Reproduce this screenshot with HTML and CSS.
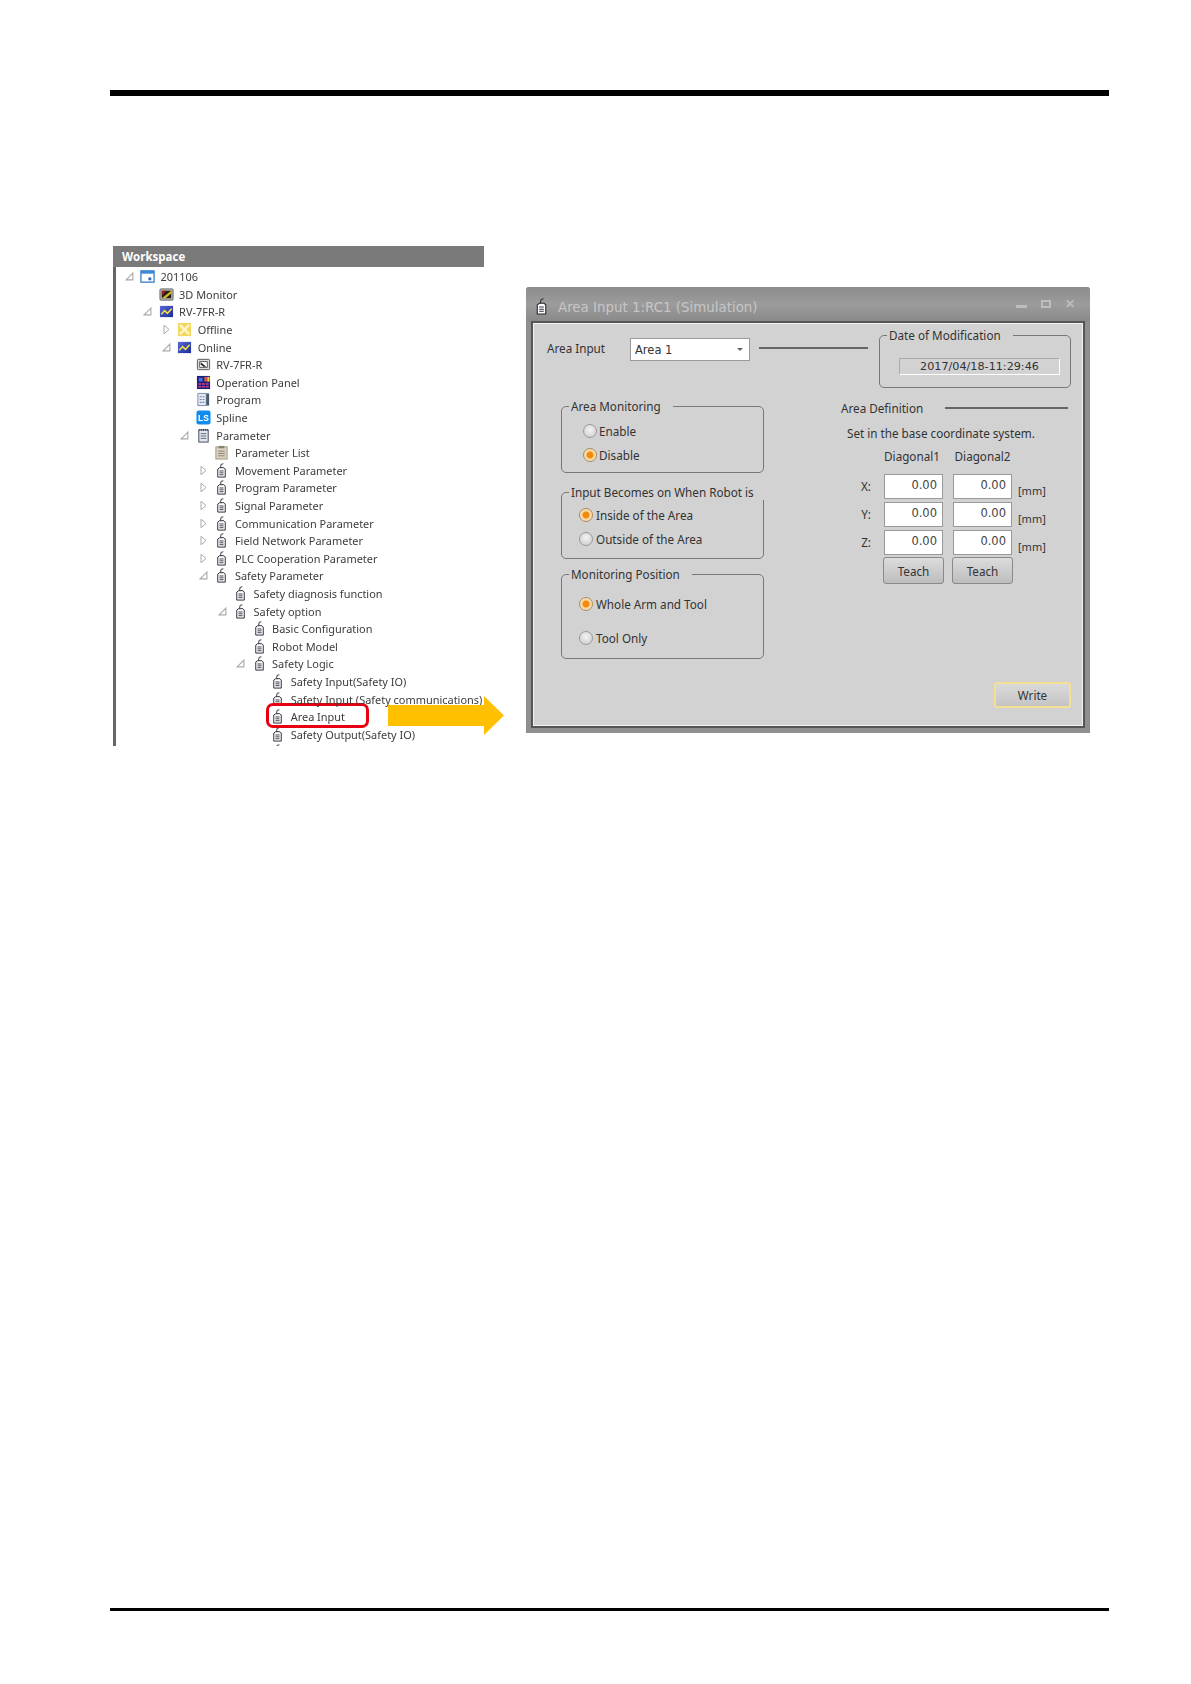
FILE: index.html
```html
<!DOCTYPE html>
<html lang="en">
<head>
<meta charset="utf-8">
<title>Area Input</title>
<link rel="stylesheet" href="styles.css">
</head>
<body>
<svg class="defs" width="0" height="0" aria-hidden="true">
  <defs>
    <linearGradient id="blue" x1="0" y1="0" x2="1" y2="1"><stop offset="0" stop-color="#5a6ad8"/><stop offset="1" stop-color="#1c2a9a"/></linearGradient>
    <symbol id="i-win" viewBox="0 0 16 16"><rect x="1" y="2" width="14" height="12" fill="#fff" stroke="#3a7cc8" stroke-width="1.4"/><rect x="1" y="2" width="14" height="3" fill="#3a8ad8"/><rect x="9" y="9" width="3" height="3" fill="#2a6ab0"/></symbol>
    <symbol id="i-3d" viewBox="0 0 16 16"><rect x="1" y="2" width="14" height="12" rx="1" fill="#b8b8b8" stroke="#666"/><rect x="3" y="4" width="10" height="8" fill="#2a1a1a"/><path d="M3 12 13 4v3l-6 5z" fill="#c8c020"/><path d="M3 4h5L3 9z" fill="#a02020"/></symbol>
    <symbol id="i-zig" viewBox="0 0 16 16"><rect x="1" y="2" width="14" height="12" fill="url(#blue)"/><path d="M2.500 11 6 7l3 3 4.500-5" fill="none" stroke="#f0e040" stroke-width="1.700"/></symbol>
    <symbol id="i-off" viewBox="0 0 16 16"><rect x="1" y="1" width="14" height="14" fill="#f2d860"/><path d="M3 3 13 13M13 3 3 13" stroke="#fff6c8" stroke-width="2.500"/></symbol>
    <symbol id="i-rc" viewBox="0 0 16 16"><rect x="1.500" y="2.500" width="13" height="11" rx="1" fill="#ddd" stroke="#555"/><rect x="4" y="5" width="8" height="6" fill="#fff" stroke="#333" stroke-width=".8"/><path d="M5 5.500 11 10.500H8L5 8z" fill="#222"/></symbol>
    <symbol id="i-panel" viewBox="0 0 16 16"><rect x="1" y="1" width="14" height="14" fill="#1a2080"/><rect x="3" y="3" width="4" height="4" fill="#4a70e0"/><rect x="9" y="2" width="2.500" height="5" fill="#e86030"/><rect x="12" y="2" width="2.500" height="5" fill="#e8d040"/><path d="M2.500 9.500h3M6.500 9.500h3M10.500 9.500h3M2.500 12.500h3M6.500 12.500h3M10.500 12.500h3" stroke="#d04088" stroke-width="1.600"/></symbol>
    <symbol id="i-prog" viewBox="0 0 16 16"><path d="M2 1.500h9v13H2z" fill="#dfe8f4" stroke="#7a8aa0"/><rect x="11" y="1.500" width="3" height="13" fill="#4a5a70"/><path d="M4 5h2M7 5h2M4 8h2M7 8h2M4 11h2M7 11h2" stroke="#7a8aa0" stroke-width="1.200"/></symbol>
    <symbol id="i-spline" viewBox="0 0 16 16"><rect x="0.500" y="0.500" width="15" height="15" rx="2.500" fill="#0f8cf0"/><text x="8" y="12" text-anchor="middle" class="ls">LS</text></symbol>
    <symbol id="i-param" viewBox="0 0 16 16"><rect x="3" y="2" width="10" height="13" fill="#dde6f0" stroke="#445"/><path d="M4 1v2M6 1v2M8 1v2M10 1v2M12 1v2" stroke="#334" stroke-width=".9"/><path d="M5 6h6M5 8.500h6M5 11h6" stroke="#556" stroke-width=".9"/></symbol>
    <symbol id="i-list" viewBox="0 0 16 16"><rect x="2" y="2" width="12" height="13" fill="#d8d2c0" stroke="#a09880"/><rect x="5" y="1" width="6" height="2.500" fill="#888070"/><path d="M4.500 6.500h7M4.500 9h7M4.500 11.500h7" stroke="#8a8272"/></symbol>
    <symbol id="i-pend" viewBox="0 0 16 16"><path d="M7 5 7.500 1.500 10 .8" fill="none" stroke="#333" stroke-width="1"/><path d="M4 6.500 6 5h4.500L12 6.500V15H4z" fill="#fff" stroke="#223" stroke-width="1"/><path d="M5.800 8.500h4.400M5.800 10.500h4.400M5.800 12.500h4.400" stroke="#334" stroke-width="1"/></symbol>
    <symbol id="t-open" viewBox="0 0 8 8"><path d="M7 1V7H1z" fill="#fff" stroke="#aaa"/></symbol>
    <symbol id="t-closed" viewBox="0 0 7 10"><path d="M1 .7 6 5 1 9.300z" fill="#fff" stroke="#aaa"/></symbol>
  </defs>
</svg>

<div class="page">
  <div class="rule-top"></div>

  <div class="figure">
    <section class="workspace">
      <h2 class="ws-head">Workspace</h2>
      <div class="tree">
        <div class="row l0"><span class="tg"><svg class="to"><use href="#t-open"/></svg></span><svg class="ic"><use href="#i-win"/></svg><span>201106</span></div>
        <div class="row l1"><span class="tg"></span><svg class="ic"><use href="#i-3d"/></svg><span>3D Monitor</span></div>
        <div class="row l1"><span class="tg"><svg class="to"><use href="#t-open"/></svg></span><svg class="ic"><use href="#i-zig"/></svg><span>RV-7FR-R</span></div>
        <div class="row l2"><span class="tg"><svg class="tc"><use href="#t-closed"/></svg></span><svg class="ic"><use href="#i-off"/></svg><span>Offline</span></div>
        <div class="row l2"><span class="tg"><svg class="to"><use href="#t-open"/></svg></span><svg class="ic"><use href="#i-zig"/></svg><span>Online</span></div>
        <div class="row l3"><span class="tg"></span><svg class="ic"><use href="#i-rc"/></svg><span>RV-7FR-R</span></div>
        <div class="row l3"><span class="tg"></span><svg class="ic"><use href="#i-panel"/></svg><span>Operation Panel</span></div>
        <div class="row l3"><span class="tg"></span><svg class="ic"><use href="#i-prog"/></svg><span>Program</span></div>
        <div class="row l3"><span class="tg"></span><svg class="ic"><use href="#i-spline"/></svg><span>Spline</span></div>
        <div class="row l3"><span class="tg"><svg class="to"><use href="#t-open"/></svg></span><svg class="ic"><use href="#i-param"/></svg><span>Parameter</span></div>
        <div class="row l4"><span class="tg"></span><svg class="ic"><use href="#i-list"/></svg><span>Parameter List</span></div>
        <div class="row l4"><span class="tg"><svg class="tc"><use href="#t-closed"/></svg></span><svg class="ic"><use href="#i-pend"/></svg><span>Movement Parameter</span></div>
        <div class="row l4"><span class="tg"><svg class="tc"><use href="#t-closed"/></svg></span><svg class="ic"><use href="#i-pend"/></svg><span>Program Parameter</span></div>
        <div class="row l4"><span class="tg"><svg class="tc"><use href="#t-closed"/></svg></span><svg class="ic"><use href="#i-pend"/></svg><span>Signal Parameter</span></div>
        <div class="row l4"><span class="tg"><svg class="tc"><use href="#t-closed"/></svg></span><svg class="ic"><use href="#i-pend"/></svg><span>Communication Parameter</span></div>
        <div class="row l4"><span class="tg"><svg class="tc"><use href="#t-closed"/></svg></span><svg class="ic"><use href="#i-pend"/></svg><span>Field Network Parameter</span></div>
        <div class="row l4"><span class="tg"><svg class="tc"><use href="#t-closed"/></svg></span><svg class="ic"><use href="#i-pend"/></svg><span>PLC Cooperation Parameter</span></div>
        <div class="row l4"><span class="tg"><svg class="to"><use href="#t-open"/></svg></span><svg class="ic"><use href="#i-pend"/></svg><span>Safety Parameter</span></div>
        <div class="row l5"><span class="tg"></span><svg class="ic"><use href="#i-pend"/></svg><span>Safety diagnosis function</span></div>
        <div class="row l5"><span class="tg"><svg class="to"><use href="#t-open"/></svg></span><svg class="ic"><use href="#i-pend"/></svg><span>Safety option</span></div>
        <div class="row l6"><span class="tg"></span><svg class="ic"><use href="#i-pend"/></svg><span>Basic Configuration</span></div>
        <div class="row l6"><span class="tg"></span><svg class="ic"><use href="#i-pend"/></svg><span>Robot Model</span></div>
        <div class="row l6"><span class="tg"><svg class="to"><use href="#t-open"/></svg></span><svg class="ic"><use href="#i-pend"/></svg><span>Safety Logic</span></div>
        <div class="row l7"><span class="tg"></span><svg class="ic"><use href="#i-pend"/></svg><span>Safety Input(Safety IO)</span></div>
        <div class="row l7"><span class="tg"></span><svg class="ic"><use href="#i-pend"/></svg><span>Safety Input (Safety communications)</span></div>
        <div class="row l7 hl"><span class="tg"></span><svg class="ic"><use href="#i-pend"/></svg><span>Area Input</span></div>
        <div class="row l7"><span class="tg"></span><svg class="ic"><use href="#i-pend"/></svg><span>Safety Output(Safety IO)</span></div>
        <div class="row l7"><span class="tg"></span><svg class="ic"><use href="#i-pend"/></svg></div>
      </div>
    </section>

    <svg class="arrow" width="116" height="39" viewBox="0 0 116 39"><path d="M0 9H96V0L116 19.500 96 39V30H0z" fill="#ffc000"/></svg>

    <section class="dialog">
      <header class="titlebar">
        <svg class="title-ic"><use href="#i-pend"/></svg>
        <h2 class="title">Area Input 1:RC1 (Simulation)</h2>
        <div class="winbtns">
          <span class="wb-min"></span>
          <span class="wb-max"></span>
          <span class="wb-close">✕</span>
        </div>
      </header>
      <div class="body">
        <div class="top">
          <span class="area-label">Area Input</span>
          <div class="combo"><span>Area 1</span><span class="caret"></span></div>
          <div class="top-line"></div>
          <fieldset class="date-group">
            <legend>Date of Modification</legend>
            <div class="date-field">2017/04/18-11:29:46</div>
          </fieldset>
        </div>
        <div class="main">
          <div class="left">
            <fieldset class="group g1">
              <legend>Area Monitoring</legend>
              <label class="radio"><i class="dot"></i>Enable</label>
              <label class="radio"><i class="dot on"></i>Disable</label>
            </fieldset>
            <fieldset class="group g2">
              <legend class="full">Input Becomes on When Robot is</legend>
              <label class="radio"><i class="dot on"></i>Inside of the Area</label>
              <label class="radio"><i class="dot"></i>Outside of the Area</label>
            </fieldset>
            <fieldset class="group g3">
              <legend>Monitoring Position</legend>
              <label class="radio"><i class="dot on"></i>Whole Arm and Tool</label>
              <label class="radio"><i class="dot"></i>Tool Only</label>
            </fieldset>
          </div>
          <div class="right">
            <div class="def-head"><span>Area Definition</span><div class="def-line"></div></div>
            <p class="def-note">Set in the base coordinate system.</p>
            <div class="coords">
              <span></span><span class="col-h first">Diagonal1</span><span class="col-h">Diagonal2</span><span></span>
              <span class="axis">X:</span><div class="num">0.00</div><div class="num">0.00</div><span class="unit">[mm]</span>
              <span class="axis">Y:</span><div class="num">0.00</div><div class="num">0.00</div><span class="unit">[mm]</span>
              <span class="axis">Z:</span><div class="num">0.00</div><div class="num">0.00</div><span class="unit">[mm]</span>
              <span></span><button class="btn teach">Teach</button><button class="btn teach">Teach</button><span></span>
            </div>
            <button class="btn write">Write</button>
          </div>
        </div>
      </div>
    </section>
  </div>

  <div class="rule-bottom"></div>
</div>
</body>
</html>
```

FILE: styles.css
```css
*, *::before, *::after { box-sizing: border-box; }
html, body { margin: 0; padding: 0; background: #fff; }
body { font-family: "Noto Sans", "Liberation Sans", sans-serif; color: #333; }
.defs { position: absolute; }
.ls { font: 700 9px "Liberation Sans", sans-serif; fill: #fff; }

.page { display: flex; flex-direction: column; height: 1684px; padding: 90px 82px 73px 110px; }
.rule-top { height: 6px; background: #000; }
.rule-bottom { height: 3px; background: #000; margin-top: auto; }

.figure { display: flex; align-items: flex-start; position: relative; margin: 150px 0 0 3px; filter: blur(0.3px); }

/* workspace tree */
.workspace { width: 371px; height: 500px; overflow: hidden; }
.ws-head { margin: 0; height: 21px; padding-left: 9px; background: #7a7a7a; color: #fff; font-size: 11.500px; font-weight: 700; line-height: 21px; font-family: "Open Sans", sans-serif; }
.tree { height: 479px; border-left: 3px solid #666; padding-top: 1px; overflow: hidden; background: #fff; }
.row { display: flex; align-items: center; height: 17.600px; font-size: 10.950px; color: #3c3c3c; white-space: nowrap; position: relative; }
.row > span:last-child { position: relative; z-index: 2; }
.l0 { padding-left: 6px; }
.l1 { padding-left: 24.600px; }
.l2 { padding-left: 43.200px; }
.l3 { padding-left: 61.800px; }
.l4 { padding-left: 80.400px; }
.l5 { padding-left: 99px; }
.l6 { padding-left: 117.600px; }
.l7 { padding-left: 136.200px; }
.tg { width: 16px; flex: none; display: flex; justify-content: center; align-items: center; padding-right: 2px; }
.to { width: 9px; height: 9px; }
.tc { width: 7px; height: 11px; }
.ic { width: 15px; height: 15px; flex: none; margin: 0 5.500px 0 2px; }

.hl { z-index: 1; }
.hl::before { content: ""; position: absolute; left: 150px; width: 220px; top: -5px; height: 6px; background: #fff; }
.hl::after { content: ""; position: absolute; left: 150px; top: -5px; width: 103px; height: 25px; border: 3.500px solid #e60012; border-radius: 7px; z-index: 3; }

.arrow { position: absolute; left: 275px; top: 450px; z-index: 4; }

/* dialog */
.dialog { width: 564px; height: 446px; margin: 41px 0 0 42px; background: #8f8f8f; border-radius: 3px 3px 0 0; padding: 0 5px 5px 5px; display: flex; flex-direction: column; }
.titlebar { height: 34px; display: flex; align-items: center; padding: 6px 15px 0 7px; background: linear-gradient(#8c8c8c, #9c9c9c 50%, #8a8a8a); margin: 0 -5px; border-radius: 3px 3px 0 0; }
.title-ic { width: 17px; height: 17px; margin-right: 8px; margin-top: -2px; }
.title { margin: 0; flex: 1; font: 400 13.400px "DejaVu Sans", sans-serif; color: #c6c6c6; }
.winbtns { display: flex; align-items: center; gap: 14px; color: #bdbdbd; margin-top: -6px; }
.wb-min { width: 11px; height: 3px; background: #bdbdbd; margin-top: 5px; }
.wb-max { width: 10px; height: 8px; border: 2px solid #bdbdbd; }
.wb-close { font-size: 12px; font-weight: 700; line-height: 12px; }

.body { flex: 1; display: flex; flex-direction: column; background: #d2d2d2; border: 2px solid #555; border-bottom-width: 3px; outline: 1px solid #f2f2f2; outline-offset: -3px; font-size: 11.700px; color: #333; }
.top { display: flex; align-items: flex-start; height: 57px; padding: 4px 0 0 14px; }
.area-label { width: 83px; margin-top: 13px; line-height: 16px; }
.combo { width: 120px; height: 23px; margin-top: 11px; background: #fff; border: 1px solid #9a9a9a; display: flex; align-items: center; justify-content: space-between; padding: 0 6px 0 4px; font: 11.500px "DejaVu Sans", sans-serif; }
.caret { width: 0; height: 0; border: 3px solid transparent; border-top: 3px solid #666; border-bottom: 0; }
.top-line { width: 109px; height: 2px; margin: 20px 0 0 9px; background: #666; }

fieldset { margin: 0; padding: 0; min-width: 0; border: 1px solid #777; border-radius: 5px; }
legend { padding: 0 12px 0 2px; margin-left: 7px; line-height: 16px; white-space: nowrap; }
legend.full { padding-right: 11px; }

.date-group { width: 192px; height: 61px; margin: 0 0 0 11px; }
.date-field { margin: 15px 10px 0 19px; height: 17px; border: 1px solid #aaa; border-right-color: #fff; border-bottom-color: #fff; font: 11.200px "DejaVu Sans", sans-serif; text-align: center; line-height: 15px; }

.main { flex: 1; display: flex; padding-top: 18px; }
.left { width: 308px; padding-left: 28px; }
.group { width: 203px; }
.g1 { height: 75px; padding-top: 4.500px; }
.g2 { height: 75px; margin-top: 11px; padding-top: 2.500px; }
.g3 { height: 93px; margin-top: 7px; padding-top: 5px; }
.radio { display: flex; align-items: center; gap: 3px; height: 24px; line-height: 16px; margin-left: 21px; }
.g1 .radio { gap: 2px; }
.g2 .radio, .g3 .radio { margin-left: 17px; }
.g3 .radio { height: 34px; }
.dot { width: 14px; height: 14px; flex: none; border-radius: 50%; border: 1px solid #9a9a9a; background: radial-gradient(circle at 50% 40%, #f4f4f4, #c8c8c8); }
.dot.on { border-color: #b08a50; background: radial-gradient(circle, #f08a10 0 3px, #ffd890 4px, #e8e0d0 6px); }

.right { flex: 1; display: flex; flex-direction: column; padding-right: 12px; }
.def-head { display: flex; align-items: center; justify-content: space-between; height: 18px; margin-top: 1px; }
.def-line { width: 123px; height: 2px; background: #666; margin-right: 3px; }
.def-note { margin: 8px 0 0 6px; line-height: 16px; }
.coords { display: grid; grid-template-columns: 32px 59px 59px 1fr; grid-template-rows: 23px 25px 25px 25px 27px; column-gap: 10px; row-gap: 3px; margin: 7px 0 0 1px; }
.col-h { text-align: center; white-space: nowrap; line-height: 16px; }
.col-h.first { padding-right: 3px; }
.axis { text-align: right; padding-right: 3px; line-height: 24px; }
.num { background: #fff; border: 1px solid #999; text-align: right; padding-right: 5px; font: 11.500px/20px "DejaVu Sans", sans-serif; color: #444; }
.unit { font-size: 11px; line-height: 33px; margin-left: -4px; }
.btn { font: 11.700px "Noto Sans", sans-serif; color: #333; padding: 0; background: linear-gradient(#dcdcdc, #bdbdbd); border: 1px solid #8a8a8a; border-radius: 3px; }
.teach { height: 27px; margin: -1px -1px 0; }
.write { width: 77px; height: 26px; align-self: flex-end; margin: auto 0 17px; border: 2px solid #f4e090; background: linear-gradient(#dadada, #c4c4c4); }
```
